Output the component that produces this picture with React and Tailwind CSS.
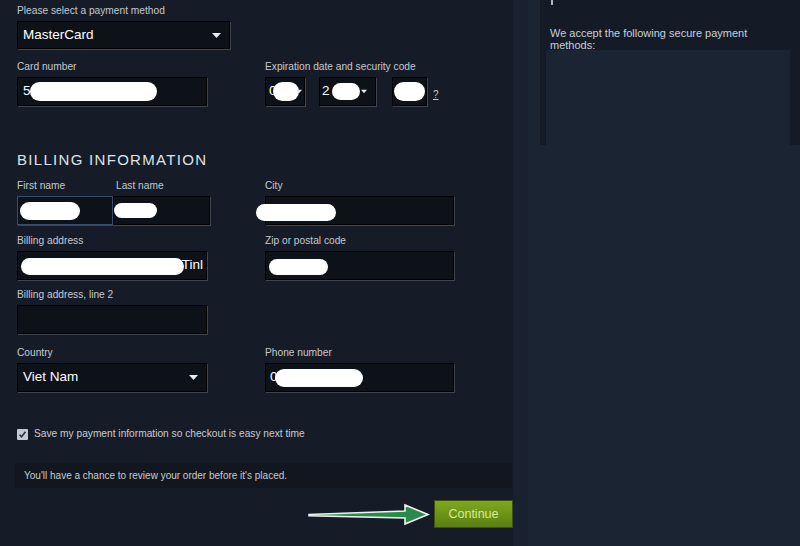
import React from 'react'

const inputCls =
  'h-[29px] bg-[#0d1118] border border-black shadow-[1px_1px_0_rgba(255,255,255,0.18)] flex items-center text-white text-[13.5px]'

const Label = ({ children, className = '' }) => (
  <div className={`text-[10.2px] leading-[14px] text-[#c3c9d1] mb-[3px] ${className}`}>{children}</div>
)

// white scribble used to hide personal data
const Blob = ({ className = '' }) => <span className={`block bg-white rounded-full ${className}`} />

const Caret = ({ className = '' }) => (
  <svg className={className} width="9" height="5" viewBox="0 0 9 5">
    <path d="M0 0h9L4.5 5z" fill="#e8ecf0" />
  </svg>
)

export default function App() {
  return (
    <div
      className="w-[800px] h-[546px] overflow-hidden flex bg-[#1b2432]"
      style={{ fontFamily: '"Liberation Sans", Arial, sans-serif' }}
    >
      {/* left form panel */}
      <div className="relative w-[513px] h-full bg-[#161c27] pl-[17px] pt-[4px]">
        <Label>Please select a payment method</Label>
        <div className={`${inputCls} !h-[28px] w-[213px] pl-[5px] pr-[8px] justify-between`}>
          <span>MasterCard</span>
          <Caret />
        </div>

        <div className="flex mt-[11px]">
          <div className="w-[248px]">
            <Label>Card number</Label>
            <div className={`${inputCls} w-[190px] pl-[5px]`}>
              <span>5</span>
              <Blob className="w-[127px] h-[19px] -ml-[1px]" />
            </div>
          </div>
          <div>
            <Label>Expiration date and security code</Label>
            <div className="flex items-center">
              <div className={`${inputCls} w-[40px] pl-[3px]`}>
                <span>0</span>
                <Blob className="w-[26px] h-[19px] -ml-[4px]" />
                <Caret className="ml-[-3px] w-[6px]" />
              </div>
              <div className={`${inputCls} w-[57px] ml-[14px] pl-[2px]`}>
                <span>2</span>
                <Blob className="w-[28px] h-[17px] ml-[2px]" />
                <Caret className="ml-[1px] w-[6px]" />
              </div>
              <div className={`${inputCls} w-[35px] ml-[16px] justify-center`}>
                <Blob className="w-[31px] h-[19px]" />
              </div>
              <span className="ml-[6px] mt-[6px] text-[10px] text-[#c3c9d1] underline">?</span>
            </div>
          </div>
        </div>

        <div className="mt-[45px] text-[15px] leading-[18px] tracking-[1.3px] text-[#dfe3e8]">
          BILLING INFORMATION
        </div>

        <div className="flex mt-[10px]">
          <div className="w-[248px] flex">
            <div className="w-[96px]">
              <Label>First name</Label>
              <div className={`${inputCls} !border-[#3a4c6e] w-[96px] pl-[2px]`}>
                <Blob className="w-[60px] h-[18px]" />
              </div>
            </div>
            <div>
              <Label className="pl-[3px]">Last name</Label>
              <div className={`${inputCls} w-[97px]`}>
                <Blob className="w-[43px] h-[15px]" />
              </div>
            </div>
          </div>
          <div>
            <Label>City</Label>
            <div className={`${inputCls} w-[189px] relative`}>
              <Blob className="absolute left-[-10px] top-[7px] w-[80px] h-[17px]" />
            </div>
          </div>
        </div>

        <div className="flex mt-[9px]">
          <div className="w-[248px]">
            <Label>Billing address</Label>
            <div className={`${inputCls} w-[190px] pl-[3px] justify-between pr-[3px] overflow-hidden`}>
              <Blob className="w-[164px] h-[17px] mt-[2px] rounded-[9px]" />
              <span className="-ml-[2px]">Tinl</span>
            </div>
          </div>
          <div>
            <Label>Zip or postal code</Label>
            <div className={`${inputCls} w-[189px] pl-[3px]`}>
              <Blob className="w-[59px] h-[16px] mt-[3px]" />
            </div>
          </div>
        </div>

        <div className="mt-[8px]">
          <Label>Billing address, line 2</Label>
          <div className={`${inputCls} w-[190px]`} />
        </div>

        <div className="flex mt-[12px]">
          <div className="w-[248px]">
            <Label>Country</Label>
            <div className={`${inputCls} w-[190px] pl-[5px] pr-[8px] justify-between`}>
              <span>Viet Nam</span>
              <Caret />
            </div>
          </div>
          <div>
            <Label>Phone number</Label>
            <div className={`${inputCls} w-[189px] pl-[4px]`}>
              <span>0</span>
              <Blob className="w-[88px] h-[18px] -ml-[3px]" />
            </div>
          </div>
        </div>

        <div className="flex items-center mt-[36px] h-[12px]">
          <span className="w-[11px] h-[11px] bg-[#c4cad2] rounded-[1px] flex items-center justify-center">
            <svg width="9" height="9" viewBox="0 0 9 9">
              <path d="M1.5 4.8l2 2 4-5" fill="none" stroke="#2a3140" strokeWidth="1.6" />
            </svg>
          </span>
          <span className="ml-[6px] text-[10.2px] text-[#c6ccd4]">
            Save my payment information so checkout is easy next time
          </span>
        </div>

        <div className="mt-[23px] -ml-[2px] w-[497px] h-[25px] bg-[#12171f] flex items-center pl-[9px] text-[10px] text-[#c6ccd4]">
          You&apos;ll have a chance to review your order before it&apos;s placed.
        </div>

        <div className="flex justify-end mt-[12px]">
          <button className="w-[79px] h-[28px] bg-gradient-to-b from-[#7fa81f] to-[#5b7f11] border border-[#3a520c] text-[12.5px] text-[#d6ec8e]">
            Continue
          </button>
        </div>

        {/* annotation arrow */}
        <svg className="absolute left-[305px] top-[500px]" width="128" height="30" viewBox="0 0 128 30">
          <path
            d="M4 14.5 L100 11 L100 5 L123 14.5 L100 24 L100 18 L4 15.8 Z"
            fill="#2a8a4c"
            stroke="#eef2ee"
            strokeWidth="1.6"
            strokeLinejoin="miter"
          />
        </svg>
      </div>

      {/* edge strip */}
      <div className="w-[15px] h-full bg-[#192130]" />

      {/* right column */}
      <div className="ml-[12px] w-[260px]">
        <div className="bg-[#151b26] pl-[5px] pr-[10px]">
          <div className="h-[50px] pl-[5px]">
            {/* tail of the heading above, scrolled out of view */}
            <div className="h-[5px] w-[2px] ml-[1px] bg-[#aeb8c2]" />
            <div className="mt-[22px] w-[230px] text-[11px] leading-[12px] text-[#c6d0da]">
              We accept the following secure payment methods:
            </div>
          </div>
          <div className="h-[95px] bg-[#1b2433] border-l border-[#131924]" />
        </div>
      </div>
    </div>
  )
}
